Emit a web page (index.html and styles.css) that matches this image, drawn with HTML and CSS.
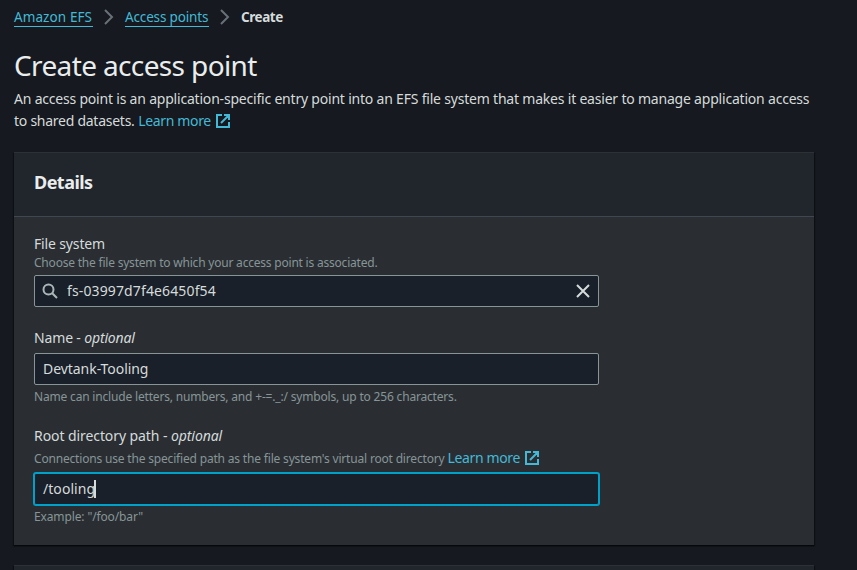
FILE: index.html
```html
<!DOCTYPE html>
<html lang="en">
<head>
<meta charset="utf-8">
<title>Create access point</title>
<link rel="stylesheet" href="styles.css">
</head>
<body>
<svg class="sprite" width="0" height="0">
  <symbol id="external" viewBox="0 0 16 16"><path d="M7 2H2v12h12V9M9 2h5v5M6 10l8-8" /></symbol>
  <symbol id="chevron" viewBox="0 0 16 16"><path d="M4 1l7 7-7 7" /></symbol>
</svg>
<main>
  <nav class="breadcrumbs">
    <a class="crumb crumb-service" href="#">Amazon EFS</a>
    <svg class="chevron"><use href="#chevron"/></svg>
    <a class="crumb crumb-list" href="#">Access points</a>
    <svg class="chevron"><use href="#chevron"/></svg>
    <span class="current">Create</span>
  </nav>
  <h1>Create access point</h1>
  <p class="description"><span class="desc-first">An access point is an application-specific entry point into an EFS file system that makes it easier to manage application access</span><br><span class="desc-second">to shared datasets.</span> <a class="learn" href="#">Learn more<svg class="external"><use href="#external"/></svg></a></p>
  <section class="panel">
    <header><h2>Details</h2></header>
    <div class="panel-body">
      <div class="field">
        <div class="label label-fs">File system</div>
        <div class="hint hint-fs"><span>Choose the file system to which your access point is associated.</span></div>
        <div class="input">
          <svg class="search" viewBox="0 0 16 16"><circle cx="6.500" cy="6.500" r="5"/><path d="M10.200 10.200L15 15"/></svg>
          <span class="value-fs">fs-03997d7f4e6450f54</span>
          <svg class="clear" viewBox="0 0 16 16"><path d="M2 2l12 12M14 2L2 14"/></svg>
        </div>
      </div>
      <div class="field">
        <div class="label label-name">Name - <i>optional</i></div>
        <div class="input"><span class="value-name">Devtank-Tooling</span></div>
        <div class="hint hint-name below">Name can include letters, numbers, and +-=._:/ symbols, up to 256 characters.</div>
      </div>
      <div class="field">
        <div class="label label-root">Root directory path - <i>optional</i></div>
        <div class="hint hint-root"><span>Connections use the specified path as the file system's virtual root directory</span><a class="learn" href="#">Learn more<svg class="external"><use href="#external"/></svg></a></div>
        <div class="input focused"><span class="value-root">/tooling</span><span class="caret"></span></div>
        <div class="hint hint-example below">Example: "/foo/bar"</div>
      </div>
    </div>
  </section>
  <section class="panel next"></section>
</main>
</body>
</html>
```
FILE: styles.css
```css
* { box-sizing: border-box; }
body {
  margin: 0;
  height: 570px;
  overflow: hidden;
  background: #16191f;
  color: #d5dbdb;
  font: 14px/22px "Noto Sans", "Open Sans", sans-serif;
  white-space: nowrap;
}
.sprite { display: block; height: 0; }
svg { flex: none; fill: none; stroke: currentColor; stroke-width: 2; }
a { color: #44b9d6; text-decoration: none; }
main { width: 800px; margin-left: 14px; }
.breadcrumbs { display: flex; height: 34px; padding-top: 8px; font-size: 13.500px; line-height: 18px; }
.crumb { height: 19px; border-bottom: 1px solid #44b9d6; }
.crumb-service { width: 79px; letter-spacing: 0.100px; }
.crumb-list { width: 84px; letter-spacing: -0.150px; }
.chevron { width: 16px; height: 16px; margin: 1px 8px; color: #687078; }
.current { font-weight: 700; letter-spacing: -0.450px; color: #d5dbdb; }
h1 { margin: 13px 0 0; font-size: 28px; line-height: 36px; font-weight: 400; letter-spacing: -0.630px; color: #eaeded; }
.description { margin: 5px 0 0; }
.desc-first { letter-spacing: -0.203px; }
.desc-second { letter-spacing: -0.260px; }
.learn { letter-spacing: -0.350px; font-size: 14px; }
.external { width: 16px; height: 16px; margin-left: 4px; vertical-align: -3px; }
.panel { margin-top: 20px; height: 393px; background: #2a2e33; border-top: 1px solid #2d3136; box-shadow: 0 1px 1px #05080c, 1px 1px 1px #0f1317, -1px 1px 1px #0f1317; }
.panel header { height: 64px; padding: 18px 20px 0; background: #21252c; border-bottom: 1px solid #414750; }
h2 { margin: 0; font-size: 18px; line-height: 22px; font-weight: 700; letter-spacing: -0.530px; color: #eaeded; }
.panel-body { padding: 16px 20px 0; }
.field { width: 565px; margin-bottom: 20px; }
.label { height: 22px; letter-spacing: -0.150px; }
.label-root { letter-spacing: -0.080px; }
.label-name + .input { margin-top: 4px; }
.hint { height: 16px; line-height: 16px; font-size: 12px; letter-spacing: -0.180px; color: #879596; }
.hint-fs { letter-spacing: -0.210px; }
.hint-example { letter-spacing: -0.130px; }
.below { margin-top: 4px; }
.input { display: flex; align-items: center; height: 32px; margin-top: 4px; padding: 0 8px; background: #1a2029; border: 1px solid #879596; border-radius: 2px; }
.search { width: 16px; height: 16px; margin-left: -1px; margin-right: 9px; color: #aab7b8; }
.value-fs { letter-spacing: 0.130px; }
.value-name { letter-spacing: -0.050px; }
.value-root { letter-spacing: 0.050px; }
.clear { width: 16px; height: 16px; margin-left: auto; margin-right: -1px; }
.hint-root { display: flex; height: 22px; line-height: 22px; }
.hint-root > span { position: relative; top: 1px; }
.hint-root .learn { margin-left: 3px; }
.focused { border-color: #00a1c9; box-shadow: 0 0 0 1px #00a1c9; }
.caret { width: 2px; height: 18px; margin-left: -1px; background: #d5dbdb; }
.next { height: 30px; background: #21252c; }
```
